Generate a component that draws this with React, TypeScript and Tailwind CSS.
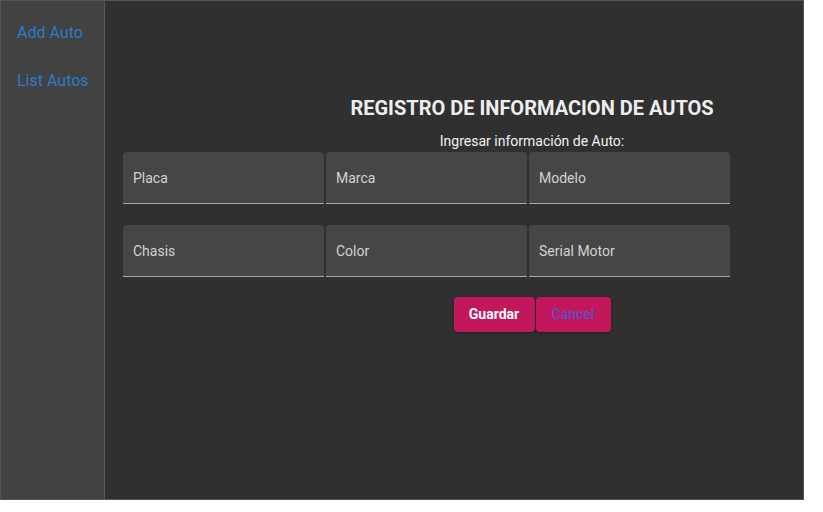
import React from "react";

const fields = [
  ["Placa", "Marca", "Modelo"],
  ["Chasis", "Color", "Serial Motor"],
];

export default function App() {
  return (
    <div className="w-[823px] h-[512px] bg-white" style={{ fontFamily: "Roboto, 'Liberation Sans', sans-serif" }}>
      <div className="w-[804px] h-[500px] border border-[#555555] flex bg-[#303030]">
        <aside className="w-[104px] shrink-0 bg-[#424242] border-r border-[#575757] flex flex-col pl-4 pt-[20px] gap-[24px]">
          <a className="text-[16px] leading-[24px] text-[#2a7bca]">Add Auto</a>
          <a className="text-[16px] leading-[24px] text-[#2a7bca]">List Autos</a>
        </aside>
        <main className="flex-1 overflow-hidden pl-[18px]">
          <div className="w-[818px] flex flex-col">
            <h1 className="mt-[93px] text-center text-[20px] leading-[28px] font-bold text-[#eeeeee]">
              REGISTRO DE INFORMACION DE AUTOS
            </h1>
            <p className="mt-[9px] text-center text-[14px] leading-[20px] text-[#f0f0f0]">
              Ingresar información de Auto:
            </p>
            <div className="mt-[1px] flex flex-col gap-[21px]">
              {fields.map((row, i) => (
                <div key={i} className="flex gap-[2px]">
                  {row.map((f) => (
                    <div
                      key={f}
                      className="w-[201px] h-[52px] bg-[#464646] rounded-t-[4px] border-b border-[#a8a8a8] flex items-center pl-[10px] pt-[2px] text-[14px] text-[#d2d2d2]"
                    >
                      {f}
                    </div>
                  ))}
                </div>
              ))}
            </div>
            <div className="mt-[20px] flex justify-center gap-[1px]">
              <button className="w-[81px] h-[35px] rounded-[4px] bg-[#c2185b] text-white text-[14px] font-bold shadow-[0_1px_3px_rgba(0,0,0,0.4)]">
                Guardar
              </button>
              <button className="w-[75px] h-[35px] rounded-[4px] bg-[#c2185b] text-[#5a52c2] text-[14px] font-medium shadow-[0_1px_3px_rgba(0,0,0,0.4)]">
                Cancel
              </button>
            </div>
          </div>
        </main>
      </div>
    </div>
  );
}
